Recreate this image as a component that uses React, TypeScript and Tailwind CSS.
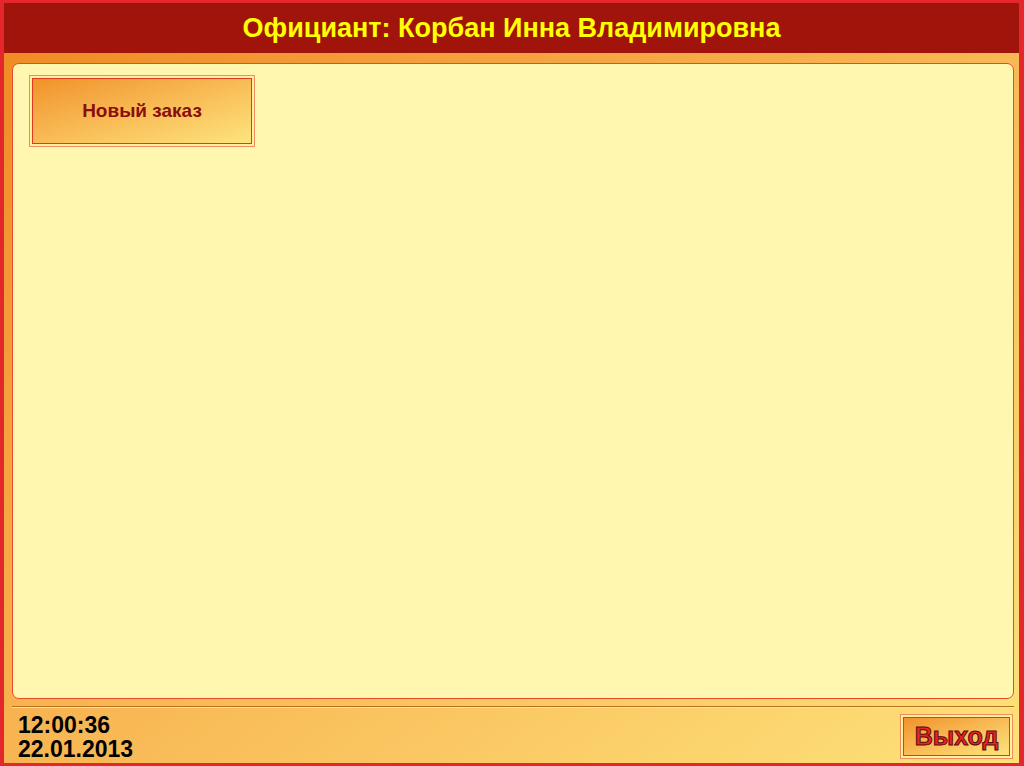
const font = { fontFamily: '"Liberation Sans", Arial, sans-serif' };

const OrangeButton = ({
  children,
  className,
}: {
  children: React.ReactNode;
  className: string;
}) => {
  return (
    <div
      className={`border border-[#f58a5a] bg-[#fdf0a0] p-[2px] ${className}`}
    >
      <div className="w-full h-full border border-[#e23a22] bg-linear-to-br from-[#f09228] to-[#fde47c] flex items-center justify-center">
        {children}
      </div>
    </div>
  );
};

export default function App() {
  return (
    <div
      className="w-[1024px] h-[766px] overflow-hidden border-[#e3272b] border-l-[4px] border-r-[5px] border-t-[3px] border-b-[3px] flex flex-col bg-linear-to-br from-[#ee8820] to-[#fde27a]"
      style={font}
    >
      {/* header */}
      <div className="h-[50px] bg-[#a1140b] flex items-center justify-center">
        <h1 className="text-[27px] font-bold text-[#ffff00] leading-none">
          Официант: Корбан Инна Владимировна
        </h1>
      </div>

      {/* main panel */}
      <div className="pt-[10px] pl-[8px] pr-[5px]">
        <div className="h-[636px] bg-[#fff7b0] border border-[#ea4a2a] rounded-[7px] pt-[11px] pl-[16px]">
          <OrangeButton className="w-[226px] h-[72px]">
            <span className="text-[19px] font-bold text-[#8a0e0a]">
              Новый заказ
            </span>
          </OrangeButton>
        </div>
      </div>

      {/* separator */}
      <div className="pl-[8px] pr-[5px] mt-[7px]">
        <div className="h-px bg-[#b8701e]" />
        <div className="h-px bg-[#ffe2a0]" />
      </div>

      {/* footer */}
      <div className="flex-1 flex items-start justify-between pl-[14px] pr-[6px] pt-[5px]">
        <div className="text-[23px] font-bold text-black leading-[24px]">
          <div>12:00:36</div>
          <div>22.01.2013</div>
        </div>
        <OrangeButton className="w-[113px] h-[45px] mt-[1px]">
          <span
            className="text-[25px] font-bold text-[#e3262a] leading-none"
            style={{ WebkitTextStroke: "1px #5a0a08" }}
          >
            Выход
          </span>
        </OrangeButton>
      </div>
    </div>
  );
}
